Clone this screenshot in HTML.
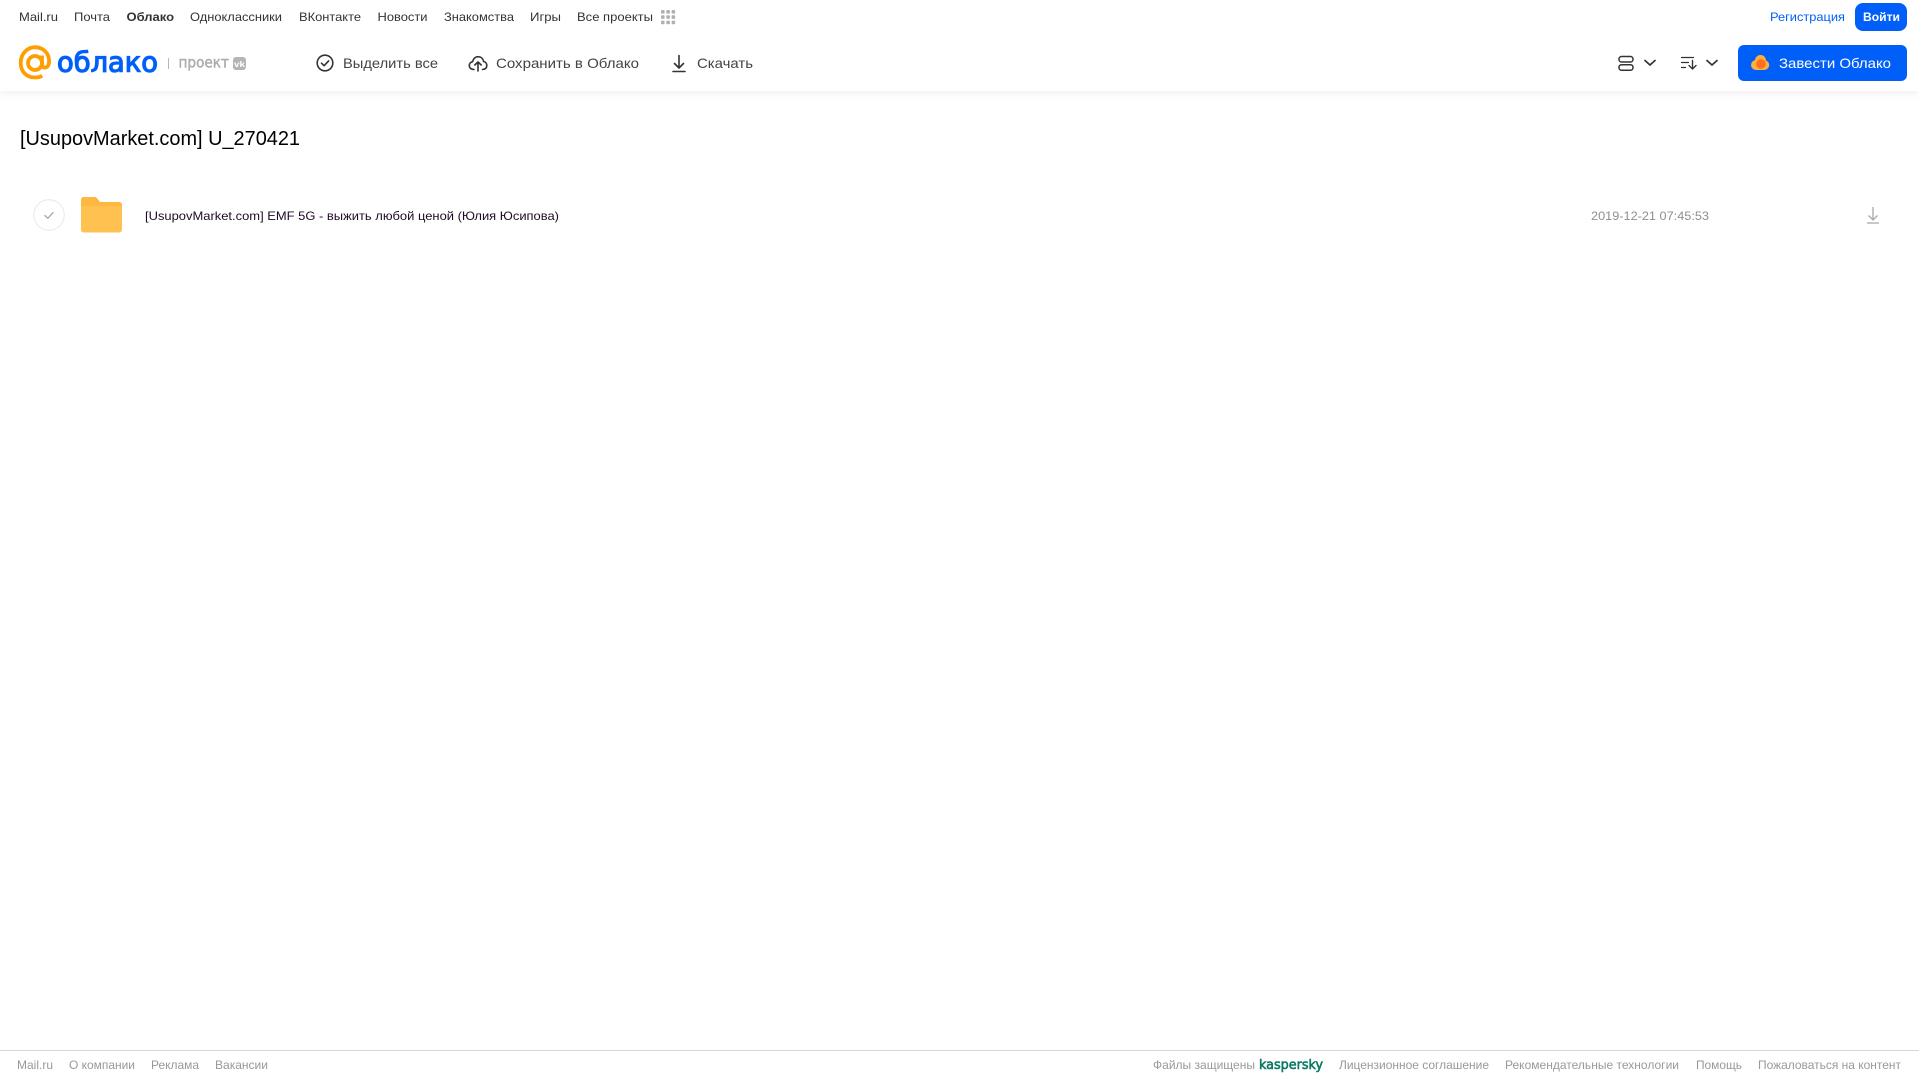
<!DOCTYPE html>
<html lang="ru">
<head>
<meta charset="utf-8">
<title>Облако</title>
<style>
html,body{margin:0;padding:0;background:#fff}
body{width:1919px;height:1079px;overflow:hidden;position:relative;font-family:"Liberation Sans",Arial,sans-serif}
svg.page{position:absolute;left:0;top:0}
.hdr{position:absolute;left:0;top:0;width:1919px;height:91px;background:#fff;box-shadow:0 2px 8px rgba(0,0,0,.07)}
.ln{position:absolute;left:0;top:1050px;width:1919px;height:1px;background:#d6d6d6}
.b{position:absolute;background:#005ff9}
</style>
</head>
<body>
<div class="hdr"></div>
<div class="ln"></div>
<div class="b" style="left:1855px;top:3px;width:52px;height:28px;border-radius:8px"></div>
<div class="b" style="left:1738px;top:45px;width:169px;height:36px;border-radius:6px"></div>
<svg class="page" width="1919" height="1079" viewBox="0 0 1919 1079" xmlns="http://www.w3.org/2000/svg">
<g font-size="12" fill="#333" font-family="'Liberation Sans',Arial,sans-serif">
<text x="19" y="21" textLength="39" lengthAdjust="spacingAndGlyphs">Mail.ru</text>
<text x="74" y="21" textLength="36" lengthAdjust="spacingAndGlyphs">Почта</text>
<text x="126.500" y="21" textLength="47.500" lengthAdjust="spacingAndGlyphs" font-weight="bold">Облако</text>
<text x="190" y="21" textLength="92" lengthAdjust="spacingAndGlyphs">Одноклассники</text>
<text x="299" y="21" textLength="62" lengthAdjust="spacingAndGlyphs">ВКонтакте</text>
<text x="377.500" y="21" textLength="50" lengthAdjust="spacingAndGlyphs">Новости</text>
<text x="444" y="21" textLength="70" lengthAdjust="spacingAndGlyphs">Знакомства</text>
<text x="530" y="21" textLength="31" lengthAdjust="spacingAndGlyphs">Игры</text>
<text x="577" y="21" textLength="76" lengthAdjust="spacingAndGlyphs">Все проекты</text>
</g>
<g fill="#b0b0b0">
<rect x="661" y="10" width="3.600" height="3.600" rx="1"/><rect x="666.300" y="10" width="3.600" height="3.600" rx="1"/><rect x="671.600" y="10" width="3.600" height="3.600" rx="1"/>
<rect x="661" y="15.300" width="3.600" height="3.600" rx="1"/><rect x="666.300" y="15.300" width="3.600" height="3.600" rx="1"/><rect x="671.600" y="15.300" width="3.600" height="3.600" rx="1"/>
<rect x="661" y="20.600" width="3.600" height="3.600" rx="1"/><rect x="666.300" y="20.600" width="3.600" height="3.600" rx="1"/><rect x="671.600" y="20.600" width="3.600" height="3.600" rx="1"/>
</g>
<text x="1770" y="21" font-size="12" fill="#005ff9" textLength="75" lengthAdjust="spacingAndGlyphs">Регистрация</text>
<text x="1863" y="21" font-size="12" font-weight="bold" fill="#fff" textLength="37" lengthAdjust="spacingAndGlyphs">Войти</text>

<!-- logo -->
<g fill="none" stroke="#ff9e00" stroke-width="3.800">
<circle cx="35" cy="63" r="7"/>
<path d="M42 55.500v9.500c0 3.600 5.600 3.600 6.600-.5 .4-1.400 .5-2.500 .5-3.500 0-8.300-6.500-13.800-14.100-13.800S20.700 53.700 20.700 63s6.500 14.500 14.300 14.500c2.700 0 5-.5 7.200-1.700"/>
</g>
<text x="57" y="71.500" font-size="27.500" fill="#005ff9" stroke="#005ff9" stroke-width="1.200" font-family="'DejaVu Sans',sans-serif" textLength="101" lengthAdjust="spacingAndGlyphs">облако</text>
<rect x="168" y="58" width="1" height="11" fill="#b8b8b8"/>
<text x="178.500" y="67.500" font-size="15.500" fill="#adadad" stroke="#adadad" stroke-width=".5" font-family="'DejaVu Sans',sans-serif" textLength="50.500" lengthAdjust="spacingAndGlyphs">проект</text>
<rect x="233" y="57" width="13" height="13" rx="3" fill="#b5b5b5"/>
<text x="234" y="67" font-size="8" font-weight="bold" fill="#fff" textLength="11" lengthAdjust="spacingAndGlyphs">vk</text>

<!-- toolbar -->
<g fill="none" stroke="#333" stroke-width="1.600" stroke-linecap="round" stroke-linejoin="round">
<circle cx="325" cy="63" r="7.800"/>
<path d="M321.500 63.200l2.600 2.500 4.500-4.800"/>
<path d="M474 69.500c-3.500-.2-4.800-2-4.700-4 .1-2 1.500-3.500 3.300-3.800 .6-3.200 3-5 5.500-5 2.800 0 5 1.800 5.500 4.800 1.900.3 3.200 2 3.200 4 0 2.200-1.500 3.800-4.300 4"/>
<path d="M478 71v-9M474.800 65l3.200-3 3.200 3"/>
<path d="M679 55.500v12.500M674.500 63.500l4.500 4.500 4.500-4.500"/>
<path d="M673 71.500h12"/>
</g>
<g font-size="14" fill="#444" font-family="'Liberation Sans',Arial,sans-serif">
<text x="343" y="68" textLength="95" lengthAdjust="spacingAndGlyphs">Выделить все</text>
<text x="496" y="68" textLength="143" lengthAdjust="spacingAndGlyphs">Сохранить в Облако</text>
<text x="697" y="68" textLength="56" lengthAdjust="spacingAndGlyphs">Скачать</text>
</g>
<g fill="none" stroke="#333" stroke-width="1.500" stroke-linecap="round" stroke-linejoin="round">
<rect x="1619" y="56.500" width="14" height="5.500" rx="2.500"/>
<rect x="1619" y="64.700" width="14" height="5.500" rx="2.500"/>
<path d="M1645 60.500l5 4.500 5-4.500" stroke-width="1.700"/>
<path d="M1681.500 57.500h12M1681.500 62.500h7M1681.500 67.500h4" stroke-width="1.200"/>
<path d="M1692.500 60.500v8.500M1689 65.500l3.500 3.500 3.500-3.500" stroke-width="1.400"/>
<path d="M1707 60.500l5 4.500 5-4.500" stroke-width="1.700"/>
</g>

<!-- CTA -->
<g fill="#ffb03a">
<circle cx="1756" cy="65" r="5"/>
<circle cx="1760.500" cy="60.500" r="5.500"/>
<circle cx="1764.500" cy="65" r="4.700"/>
<rect x="1756" y="63" width="9" height="7"/>
</g>
<circle cx="1761" cy="64" r="4.800" fill="#ff6f20"/>
<text x="1779" y="68" font-size="14" fill="#fff" textLength="112" lengthAdjust="spacingAndGlyphs">Завести Облако</text>

<!-- title -->
<text x="20" y="145" font-size="20" fill="#000" textLength="280" lengthAdjust="spacingAndGlyphs">[UsupovMarket.com] U_270421</text>

<!-- row -->
<circle cx="49" cy="215" r="15.300" fill="#fff" stroke="#e8e8e8" stroke-width="1"/>
<path d="M45 215.500l2.800 2.800 5.200-5.600" fill="none" stroke="#a5a5a5" stroke-width="1.300" stroke-linecap="round" stroke-linejoin="round"/>
<path d="M81 200c0-1.700 1.300-3 3-3h10c1.400 0 2.400.6 3.300 1.600l2.700 3.400H119c1.700 0 3 1.300 3 3v24.500c0 1.700-1.300 3-3 3H84c-1.700 0-3-1.300-3-3z" fill="#ffc14f"/>
<path d="M81 200c0-1.700 1.300-3 3-3h10c1.400 0 2.400.6 3.300 1.600l2.700 3.400H119c1.700 0 3 1.300 3 3v1H81z" fill="#ffb740"/>
<text x="145" y="220" font-size="12" fill="#1f0a26" textLength="414" lengthAdjust="spacingAndGlyphs">[UsupovMarket.com] EMF 5G - выжить любой ценой (Юлия Юсипова)</text>
<text x="1591" y="220" font-size="12" fill="#8f8f8f" textLength="118" lengthAdjust="spacingAndGlyphs">2019-12-21 07:45:53</text>
<path d="M1873 207v13M1868.500 215.500l4.500 4.500 4.500-4.500M1867 223h12" fill="none" stroke="#a8a8a8" stroke-width="1.300"/>

<!-- footer -->
<g font-size="12" fill="#999" font-family="'Liberation Sans',Arial,sans-serif">
<text x="17" y="1069" textLength="36" lengthAdjust="spacingAndGlyphs">Mail.ru</text>
<text x="69" y="1069" textLength="66" lengthAdjust="spacingAndGlyphs">О компании</text>
<text x="151" y="1069" textLength="48" lengthAdjust="spacingAndGlyphs">Реклама</text>
<text x="215" y="1069" textLength="53" lengthAdjust="spacingAndGlyphs">Вакансии</text>
<text x="1153" y="1069" textLength="102" lengthAdjust="spacingAndGlyphs">Файлы защищены</text>
<text x="1339" y="1069" textLength="150" lengthAdjust="spacingAndGlyphs">Лицензионное соглашение</text>
<text x="1505" y="1069" textLength="174" lengthAdjust="spacingAndGlyphs">Рекомендательные технологии</text>
<text x="1696" y="1069" textLength="46" lengthAdjust="spacingAndGlyphs">Помощь</text>
<text x="1758" y="1069" textLength="143" lengthAdjust="spacingAndGlyphs">Пожаловаться на контент</text>
</g>
<text x="1259" y="1069" font-size="13" fill="#0c7a63" stroke="#0c7a63" stroke-width=".6" font-family="'DejaVu Sans',sans-serif" textLength="64" lengthAdjust="spacingAndGlyphs">kaspersky</text>
</svg>
</body>
</html>
